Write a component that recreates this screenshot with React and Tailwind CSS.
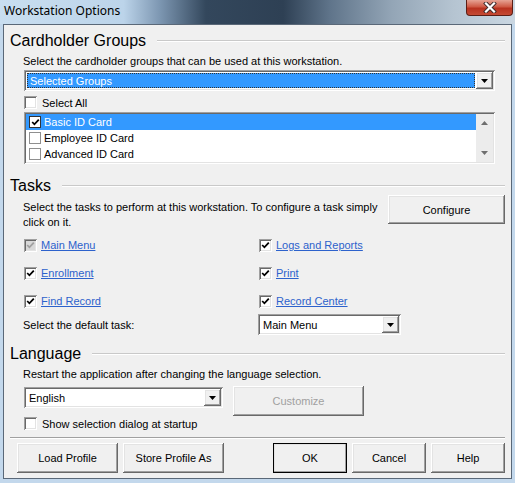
import React from 'react';

const RAISED =
  'bg-[#f0f0f0] shadow-[inset_-1px_-1px_#696969,inset_1px_1px_#ffffff,inset_-2px_-2px_#a0a0a0,inset_2px_2px_#e3e3e3]';
const SUNKEN =
  'shadow-[inset_1px_1px_#a0a0a0,inset_-1px_-1px_#ffffff,inset_2px_2px_#696969,inset_-2px_-2px_#e3e3e3]';

function Check({ color = '#000' }) {
  return (
    <svg width="9" height="9" viewBox="0 0 9 9">
      <polyline points="1.2,4 3.4,6.3 7.8,1.6" fill="none" stroke={color} strokeWidth="1.8" />
    </svg>
  );
}

function Box({ checked, disabled }) {
  return (
    <div
      className={`w-[13px] h-[13px] shrink-0 flex items-center justify-center ${SUNKEN} ${
        disabled ? 'bg-[#d8d8d8]' : 'bg-white'
      }`}
    >
      {checked && <Check color={disabled ? '#a0a0a0' : '#000'} />}
    </div>
  );
}

function Arrow({ color = '#000' }) {
  return (
    <svg width="7" height="4" viewBox="0 0 7 4">
      <polygon points="0,0 7,0 3.5,4" fill={color} />
    </svg>
  );
}

function Combo({ text, selected, className }) {
  return (
    <div className={`flex bg-white p-[2px] ${SUNKEN} ${className}`}>
      <div className="flex-1 flex items-center p-[1px]">
        <div
          className={`flex-1 h-full flex items-center pl-[2px] ${
            selected ? 'bg-[#3399ff] text-white border border-dotted border-[#333]' : 'text-black'
          }`}
        >
          {text}
        </div>
      </div>
      <div className={`w-[17px] flex items-center justify-center ${RAISED}`}>
        <Arrow />
      </div>
    </div>
  );
}

function Btn({ children, className, disabled, def }) {
  return (
    <div
      className={`flex items-center justify-center ${RAISED} ${disabled ? 'text-[#a0a0a0]' : 'text-black'} ${
        def ? 'outline outline-1 outline-[#000] -outline-offset-1' : ''
      } ${className}`}
    >
      {children}
    </div>
  );
}

function Heading({ children }) {
  return (
    <div className="flex items-center h-[18px]">
      <span className="text-[16px] leading-[18px] text-black">{children}</span>
      <div className="flex-1 ml-[11px] h-[2px] border-t border-[#c9c9c9] border-b border-b-white" />
    </div>
  );
}

function Task({ label, checked = true, disabled }) {
  return (
    <div className="flex items-center h-[14px] gap-[4px]">
      <Box checked={checked} disabled={disabled} />
      <span className="text-[#2d62cc] underline">{label}</span>
    </div>
  );
}

function ListRow({ label, checked, active }) {
  return (
    <div className={`flex items-center h-[16px] pl-[3px] gap-[3px] ${active ? 'bg-[#3399ff] text-white' : ''}`}>
      <div
        className={`w-[12px] h-[12px] bg-white border flex items-center justify-center ${
          active ? 'border-[#333]' : 'border-[#8f8f8f]'
        }`}
      >
        {checked && <Check />}
      </div>
      <span>{label}</span>
    </div>
  );
}

export default function App() {
  return (
    <div className="w-[515px] h-[483px] bg-[#c3d8ec] flex flex-col overflow-hidden font-['Liberation_Sans',Arial,sans-serif] text-[11px] leading-[14px] relative">
      {/* title bar */}
      <div className="h-[24px] flex items-center pl-[4px] pb-[3px] bg-[linear-gradient(90deg,#c9def0_0%,#bcd4ea_24%,#7d97b2_31%,#33475c_40%,#2e4054_55%,#5f748a_64%,#93a5b6_76%,#b5c4d1_88%,#cad7e2_100%)]">
        <span className="font-['Noto_Sans',sans-serif] text-[12px] text-black">Workstation Options</span>
      </div>
      <div className="absolute top-0 right-[2px] w-[47px] h-[16px] rounded-b-[4px] border border-t-0 border-[#5c1e15] bg-[linear-gradient(180deg,#e6a394_0%,#cf5a45_45%,#b8321f_55%,#c44a34_100%)] flex items-center justify-center">
        <svg width="14" height="11" viewBox="0 0 14 11">
          <path d="M3 1.5 L11 9.5 M11 1.5 L3 9.5" stroke="#3b2a2a" strokeWidth="4" strokeLinecap="square" />
          <path d="M3 1.5 L11 9.5 M11 1.5 L3 9.5" stroke="#ffffff" strokeWidth="2.2" strokeLinecap="square" />
        </svg>
      </div>

      {/* client */}
      <div className="flex-1 ml-[3px] mr-[3px] mb-[4px] border border-[#5a6878] bg-[#f0f0f0] flex flex-col px-[6px] pt-[7px]">
        {/* Cardholder Groups */}
        <Heading>Cardholder Groups</Heading>
        <div className="pl-[14px] pr-[10px] flex flex-col">
          <div className="mt-[4px] h-[14px] -ml-[1px]">Select the cardholder groups that can be used at this workstation.</div>
          <Combo text="Selected Groups" selected className="mt-[2px] h-[21px]" />
          <div className="mt-[5px] flex items-center gap-[5px] h-[13px]">
            <Box />
            <span>Select All</span>
          </div>
          <div className={`mt-[3px] h-[52px] bg-white p-[2px] flex ${SUNKEN}`}>
            <div className="flex-1 flex flex-col">
              <ListRow label="Basic ID Card" checked active />
              <ListRow label="Employee ID Card" />
              <ListRow label="Advanced ID Card" />
            </div>
            <div className="w-[17px] bg-[#ececec] flex flex-col items-center justify-between py-[7px]">
              <svg width="7" height="4" viewBox="0 0 7 4">
                <polygon points="0,4 7,4 3.5,0" fill="#6e6e6e" />
              </svg>
              <Arrow color="#6e6e6e" />
            </div>
          </div>
        </div>

        {/* Tasks */}
        <div className="mt-[13px]">
          <Heading>Tasks</Heading>
        </div>
        <div className="flex pl-[13px]">
          <div className="flex-1 pt-[5px] leading-[15px]">
            Select the tasks to perform at this workstation. To configure a task simply
            <br />
            click on it.
          </div>
          <Btn className="w-[117px] h-[29px] shrink-0">Configure</Btn>
        </div>
        <div className="mt-[8px] pl-[14px] grid grid-cols-[235px_1fr] gap-y-[14px]">
          <Task label="Main Menu" disabled />
          <Task label="Logs and Reports" />
          <Task label="Enrollment" />
          <Task label="Print" />
          <Task label="Find Record" />
          <Task label="Record Center" />
        </div>
        <div className="mt-[6px] pl-[13px] flex items-center">
          <span className="w-[235px]">Select the default task:</span>
          <Combo text="Main Menu" className="w-[143px] h-[21px]" />
        </div>

        {/* Language */}
        <div className="mt-[10px]">
          <Heading>Language</Heading>
        </div>
        <div className="mt-[4px] pl-[13px] h-[14px]">
          Restart the application after changing the language selection.
        </div>
        <div className="mt-[5px] pl-[14px] flex items-start gap-[10px]">
          <Combo text="English" className="mt-[1px] w-[199px] h-[21px]" />
          <Btn disabled className="w-[131px] h-[30px]">Customize</Btn>
        </div>
        <div className="mt-[1px] pl-[14px] flex items-center gap-[5px] h-[13px]">
          <Box />
          <span>Show selection dialog at startup</span>
        </div>
        <div className="mt-[7px] h-[2px] border-t border-[#a0a0a0] border-b border-b-white" />
        <div className="mt-[4px] pl-[7px] flex">
          <Btn className="w-[101px] h-[30px]">Load Profile</Btn>
          <Btn className="ml-[5px] w-[101px] h-[30px]">Store Profile As</Btn>
          <div className="flex-1" />
          <Btn def className="w-[74px] h-[30px]">OK</Btn>
          <Btn className="ml-[5px] w-[74px] h-[30px]">Cancel</Btn>
          <Btn className="ml-[5px] w-[74px] h-[30px]">Help</Btn>
        </div>
      </div>
    </div>
  );
}
